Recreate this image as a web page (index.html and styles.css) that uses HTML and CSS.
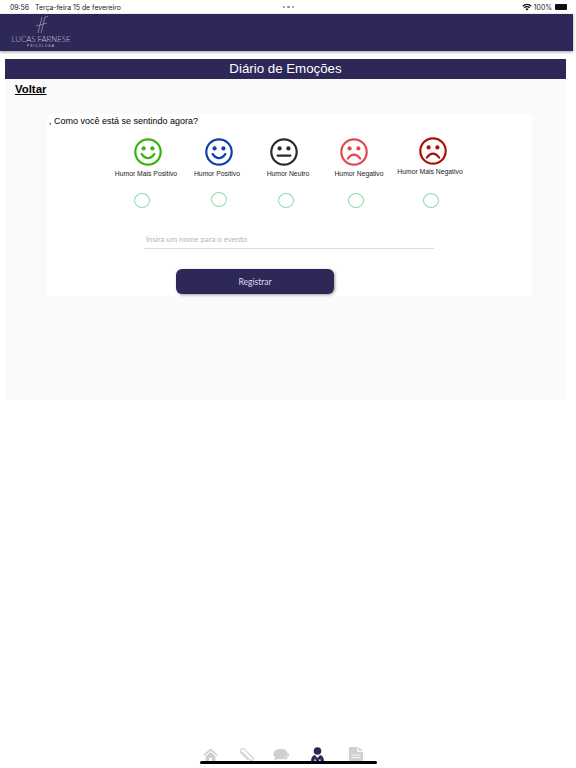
FILE: index.html
```html
<!DOCTYPE html>
<html lang="pt-BR">
<head>
    <meta charset="UTF-8">
    <meta name="viewport" content="width=device-width, initial-scale=1.0">
    <title>Diário de Emoções</title>
    <link rel="stylesheet" href="styles.css">
</head>
<body>
    <div class="app">
        <!-- Status bar -->
        <div class="status-bar">
            <div class="status-left"><span>09:56</span><span>Terça-feira 15 de fevereiro</span></div>
            <div class="status-dots"><i></i><i></i><i></i></div>
            <div class="status-right">
                <svg class="wifi" viewBox="0 0 12 9" width="10" height="8">
                    <path d="M0.3 3 A8 8 0 0 1 11.7 3 L10.6 4.1 A6.4 6.4 0 0 0 1.4 4.1 Z M2.2 4.9 A5.4 5.4 0 0 1 9.8 4.9 L8.7 6 A3.9 3.9 0 0 0 3.3 6 Z M4.1 6.8 A2.7 2.7 0 0 1 7.9 6.8 L6 8.8 Z" fill="#111"/>
                </svg>
                <span>100%</span>
                <span class="battery"></span>
            </div>
        </div>

        <!-- Header -->
        <header class="top-header">
            <div class="logo">
                <svg class="logo-mark" viewBox="0 0 16 18" width="16" height="18">
                    <path d="M5 17 L9 1 M8 17 L12 1 M3 10 L14 7 M12 1 L15 0.5" fill="none" stroke="#b9b5d2" stroke-width="0.6"/>
                </svg>
                <div class="logo-name">LUCAS FARNESE</div>
                <div class="logo-sub">PSICÓLOGA</div>
            </div>
        </header>

        <main class="page">
            <h1 class="page-title">Diário de Emoções</h1>
            <div class="panel">
                <a class="back-link" href="#">Voltar</a>
                <form class="card">
                    <p class="question">, Como você está se sentindo agora?</p>

                    <div class="moods">
                        <div class="mood mood-1">
                            <svg class="face" viewBox="0 0 28 28" width="28" height="28">
                                <circle cx="14" cy="14" r="12.7" fill="none" stroke="#3cb012" stroke-width="2.2"/>
                                <circle cx="9.6" cy="10.4" r="2.1" fill="#3cb012"/>
                                <circle cx="18.4" cy="10.4" r="2.1" fill="#3cb012"/>
                                <path d="M7.6 16 Q14 24.4 20.4 16" fill="none" stroke="#3cb012" stroke-width="2.2" stroke-linecap="round"/>
                            </svg>
                            <span>Humor Mais Positivo</span>
                        </div>
                        <div class="mood mood-2">
                            <svg class="face" viewBox="0 0 28 28" width="28" height="28">
                                <circle cx="14" cy="14" r="12.7" fill="none" stroke="#0f3eb0" stroke-width="2.2"/>
                                <circle cx="9.6" cy="10.4" r="2.1" fill="#0f3eb0"/>
                                <circle cx="18.4" cy="10.4" r="2.1" fill="#0f3eb0"/>
                                <path d="M7.6 16 Q14 24.4 20.4 16" fill="none" stroke="#0f3eb0" stroke-width="2.2" stroke-linecap="round"/>
                            </svg>
                            <span>Humor Positivo</span>
                        </div>
                        <div class="mood mood-3">
                            <svg class="face" viewBox="0 0 28 28" width="28" height="28">
                                <circle cx="14" cy="14" r="12.7" fill="none" stroke="#2b2b2b" stroke-width="2.2"/>
                                <circle cx="9.6" cy="10.4" r="2.1" fill="#2b2b2b"/>
                                <circle cx="18.4" cy="10.4" r="2.1" fill="#2b2b2b"/>
                                <path d="M7.6 17.6 H20.4" fill="none" stroke="#2b2b2b" stroke-width="2.2" stroke-linecap="round"/>
                            </svg>
                            <span>Humor Neutro</span>
                        </div>
                        <div class="mood mood-4">
                            <svg class="face" viewBox="0 0 28 28" width="28" height="28">
                                <circle cx="14" cy="14" r="12.7" fill="none" stroke="#e4474c" stroke-width="2.2"/>
                                <circle cx="9.6" cy="10.4" r="2.1" fill="#e4474c"/>
                                <circle cx="18.4" cy="10.4" r="2.1" fill="#e4474c"/>
                                <path d="M7.8 20.6 Q14 12.8 20.2 20.6" fill="none" stroke="#e4474c" stroke-width="2.2" stroke-linecap="round"/>
                            </svg>
                            <span>Humor Negativo</span>
                        </div>
                        <div class="mood mood-5">
                            <svg class="face" viewBox="0 0 28 28" width="28" height="28">
                                <circle cx="14" cy="14" r="12.7" fill="none" stroke="#a81208" stroke-width="2.2"/>
                                <circle cx="9.6" cy="10.4" r="2.1" fill="#a81208"/>
                                <circle cx="18.4" cy="10.4" r="2.1" fill="#a81208"/>
                                <path d="M7.8 20.6 Q14 12.8 20.2 20.6" fill="none" stroke="#a81208" stroke-width="2.2" stroke-linecap="round"/>
                            </svg>
                            <span>Humor Mais Negativo</span>
                        </div>
                    </div>

                    <div class="radios">
                        <span class="radio radio-1"></span>
                        <span class="radio radio-2"></span>
                        <span class="radio radio-3"></span>
                        <span class="radio radio-4"></span>
                        <span class="radio radio-5"></span>
                    </div>

                    <div class="event-name">Insira um nome para o evento</div>
                    <button class="register-btn" type="button">Registrar</button>
                </form>
            </div>
        </main>

        <!-- Tab bar -->
        <nav class="tabs">
            <svg class="tab-home" viewBox="0 0 16 14" width="15" height="14">
                <path d="M8 0 L16 7 L14.4 7.8 L8 2.4 L1.6 7.8 L0 7 Z M2.8 8.2 L8 3.8 L13.2 8.2 V14 H9.6 V10 H6.4 V14 H2.8 Z" fill="#cfcfcf"/>
            </svg>
            <svg class="tab-clip" viewBox="0 0 16 14" width="15" height="14">
                <path d="M2 3.6 L10.8 12.4 A1.9 1.9 0 0 0 13.6 9.8 L5 1.2 A2.6 2.6 0 0 0 1.2 4.8 L8.6 12.2" fill="none" stroke="#cfcfcf" stroke-width="1.2"/>
            </svg>
            <svg class="tab-chat" viewBox="0 0 18 14" width="17" height="14">
                <ellipse cx="8" cy="6" rx="7.6" ry="5.6" fill="#cfcfcf"/>
                <path d="M2.4 9 L1 13 L6 11 Z" fill="#cfcfcf"/>
                <path d="M15.6 4.6 Q18 9 12 12" fill="none" stroke="#cfcfcf" stroke-width="1.2"/>
            </svg>
            <svg class="tab-person" viewBox="0 0 14 15" width="15" height="15">
                <circle cx="7" cy="4" r="3.8" fill="#2e2859"/>
                <path d="M0.4 15 Q0.6 8.6 4.4 8 L7 11 L9.6 8 Q13.4 8.6 13.6 15 H10.4 L9.6 11.6 L8 15 H6 L4.4 11.6 L3.6 15 Z" fill="#2e2859"/>
            </svg>
            <svg class="tab-doc" viewBox="0 0 14 15" width="14" height="15">
                <path d="M0 0 H8.4 V5 H14 V15 H0 Z M9.6 0 L14 3.8 H9.6 Z" fill="#cfcfcf"/>
                <path d="M2.4 8 H11.6 M2.4 10.6 H11.6" stroke="#fff" stroke-width="0.9"/>
            </svg>
        </nav>
        <div class="home-indicator"></div>
    </div>
</body>
</html>
```

FILE: styles.css
```css
/* General */
body {
    margin: 0;
    background-color: #fff;
    font-family: 'Liberation Sans', Arial, sans-serif;
}

.app {
    position: relative;
    display: flex;
    flex-direction: column;
    width: 576px;
    height: 768px;
    overflow: hidden;
}

/* Status bar */
.status-bar {
    display: flex;
    justify-content: space-between;
    align-items: center;
    height: 14px;
    padding: 0 9px 0 10px;
    font-family: 'Inter', sans-serif;
    font-size: 6.9px;
    color: #222;
}

.status-left {
    display: flex;
    gap: 6px;
    width: 200px;
}

.status-dots {
    display: flex;
    gap: 2px;
}

.status-dots i {
    width: 2.5px;
    height: 2.5px;
    border-radius: 50%;
    background-color: #8a8a8a;
}

.status-right {
    display: flex;
    justify-content: flex-end;
    align-items: center;
    gap: 2px;
    width: 200px;
}

.battery {
    width: 12px;
    height: 6px;
    margin-left: 1px;
    border-radius: 1px;
    background-color: #111;
}

/* Header */
.top-header {
    width: 573px;
    height: 37px;
    background-color: #2e2859;
    box-shadow: 0 1px 3px rgba(0, 0, 0, 0.4);
}

.logo {
    display: flex;
    flex-direction: column;
    align-items: center;
    width: 60px;
    margin-left: 11px;
    padding-top: 2px;
    color: #c9c6dc;
}

.logo-mark {
    display: block;
}

.logo-name {
    font-family: 'Lato', sans-serif;
    font-size: 7.8px;
    font-weight: 300;
    line-height: 10px;
    white-space: nowrap;
}

.logo-sub {
    font-size: 3.2px;
    line-height: 5px;
    letter-spacing: 1px;
}

/* Page */
.page {
    width: 561px;
    margin: 8px 0 0 5px;
}

.page-title {
    margin: 0;
    height: 20px;
    background-color: #2e2859;
    color: #fff;
    font-size: 13.3px;
    font-weight: normal;
    line-height: 20px;
    text-align: center;
}

.panel {
    display: flow-root;
    height: 321px;
    background-color: #fafafa;
}

.back-link {
    display: block;
    width: max-content;
    margin: 3px 0 0 10px;
    color: #000;
    font-size: 11.4px;
    font-weight: bold;
    line-height: 14px;
}

.card {
    display: flow-root;
    height: 182px;
    margin: 18px 34px 0 42px;
    background-color: #fff;
}

.question {
    margin: 1px 0 0 2px;
    color: #000;
    font-size: 9px;
    line-height: 12px;
}

/* Moods */
.moods {
    display: grid;
    grid-template-columns: repeat(5, 71px);
    margin: 11px 0 0 63.5px;
}

.mood {
    display: flex;
    flex-direction: column;
    align-items: center;
    gap: 3px;
    color: #222;
    font-size: 6.8px;
    line-height: 9px;
    white-space: nowrap;
}

.face {
    display: block;
}

.mood-1 .face { margin-left: 4px; }
.mood-2 .face { margin-left: 4px; }
.mood-3 .face { margin-left: -8px; }
.mood-4 .face { margin-left: -10px; }
.mood-5 { margin-top: -1px; }
.mood-5 .face { margin-left: 6px; }
.mood-5 span { margin-top: -1px; }

/* Radios */
.radios {
    display: flex;
    margin: 15px 0 0 87px;
}

.radio {
    box-sizing: border-box;
    flex: none;
    width: 16px;
    height: 15px;
    border: 1px solid #8ed8ae;
    border-radius: 50%;
}

.radio-2 { margin-left: 61px; margin-top: -1px; }
.radio-3 { margin-left: 51px; }
.radio-4 { margin-left: 54px; }
.radio-5 { margin-left: 59px; }

/* Form */
.event-name {
    box-sizing: border-box;
    width: 290px;
    height: 17px;
    margin: 24px 0 0 97px;
    padding: 1px 0 0 2px;
    border-bottom: 1px solid #dcdcdc;
    color: #b5b5b5;
    font-family: 'Lato', sans-serif;
    font-size: 7.8px;
    line-height: 12px;
}

.register-btn {
    display: block;
    width: 158px;
    height: 25px;
    margin: 20px 0 0 129px;
    border: none;
    border-radius: 6px;
    background-color: #2e2859;
    box-shadow: 1px 1px 3px rgba(0, 0, 0, 0.4);
    color: #dcdaf0;
    font-family: 'Lato', sans-serif;
    font-size: 8.5px;
}

/* Tabs */
.tabs {
    display: flex;
    align-items: flex-end;
    margin-top: auto;
    padding: 0 0 6px 203px;
}

.tab-clip { margin-left: 22px; }
.tab-chat { margin-left: 18px; }
.tab-person { margin-left: 20px; }
.tab-doc { margin-left: 24px; }

.home-indicator {
    position: absolute;
    left: 200px;
    bottom: 4px;
    width: 177px;
    height: 3px;
    border-radius: 2px;
    background-color: #000;
}
```
